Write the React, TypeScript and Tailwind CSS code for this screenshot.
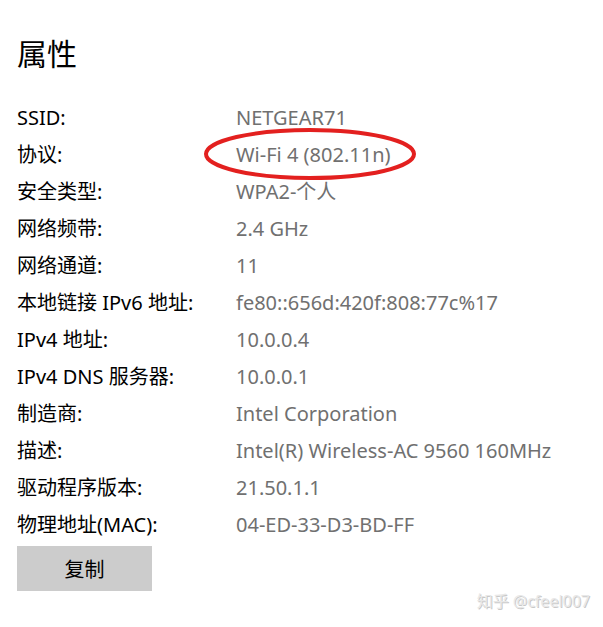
import React from "react"

const rows: [string, string][] = [
  ["SSID:", "NETGEAR71"],
  ["协议:", "Wi-Fi 4 (802.11n)"],
  ["安全类型:", "WPA2-个人"],
  ["网络频带:", "2.4 GHz"],
  ["网络通道:", "11"],
  ["本地链接 IPv6 地址:", "fe80::656d:420f:808:77c%17"],
  ["IPv4 地址:", "10.0.0.4"],
  ["IPv4 DNS 服务器:", "10.0.0.1"],
  ["制造商:", "Intel Corporation"],
  ["描述:", "Intel(R) Wireless-AC 9560 160MHz"],
  ["驱动程序版本:", "21.50.1.1"],
  ["物理地址(MAC):", "04-ED-33-D3-BD-FF"],
]

export default function App() {
  return (
    <div
      className="relative w-[603px] h-[627px] bg-white overflow-hidden px-[17px] pt-[33px]"
      style={{ fontFamily: '"Noto Sans", "Noto Sans CJK SC", sans-serif' }}
    >
      <h1 className="text-[30px] leading-[42px] text-black">属性</h1>

      <div className="mt-[24px] grid grid-cols-[219px_1fr]">
        {rows.map(([label, value]) => (
          <React.Fragment key={label}>
            <div className="h-[37px] flex items-center text-[20px] text-black">{label}</div>
            <div className="h-[37px] flex items-center text-[20px] text-[#707070]">{value}</div>
          </React.Fragment>
        ))}
      </div>

      <button className="mt-[3px] w-[135px] h-[45px] pt-[3px] bg-[#cccccc] text-[20px] text-black">复制</button>

      {/* red circle marking the protocol */}
      <svg className="absolute left-[200px] top-[124px]" width="222" height="60" viewBox="0 0 222 60">
        <ellipse cx="110" cy="30" rx="104" ry="24" fill="none" stroke="#e3201f" strokeWidth="4" />
      </svg>

      <div className="absolute right-[13px] bottom-[14px] text-[16px] text-[#e8e8e8] [text-shadow:1px_1px_0_#c8c8c8]">
        知乎 @cfeel007
      </div>
    </div>
  )
}
